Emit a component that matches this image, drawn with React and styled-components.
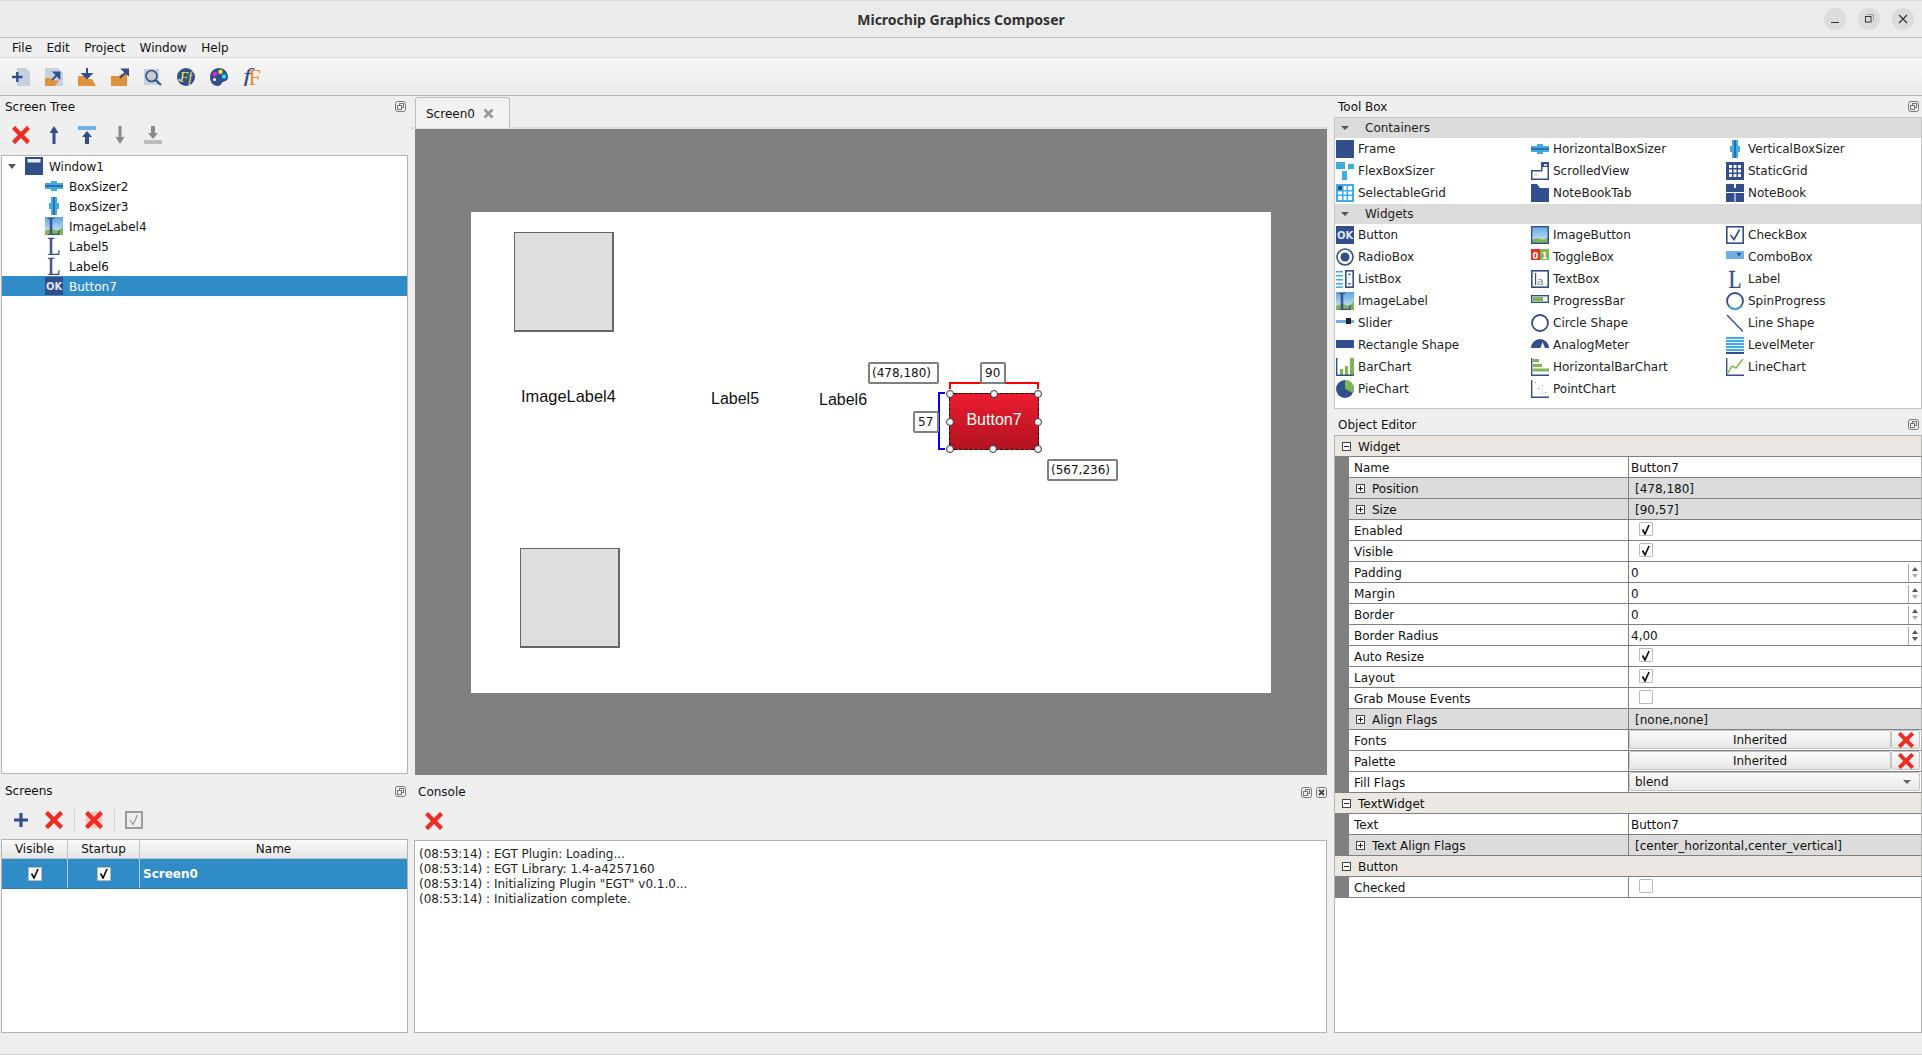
import React from "react";
import styled, { createGlobalStyle } from "styled-components";

const N = "#324f8c";
const B = "#3dade3";
const G = "#7fb654";
const R = "#f02b22";
const O = "#e0913c";
const P = "#c6d1df";

const Global = createGlobalStyle`
  html, body { margin: 0; padding: 0; height: 100%; overflow: hidden; background: #efefef; }
  body { font: 12px "DejaVu Sans", sans-serif; color: #111; }
  #root { height: 100%; }
  * { box-sizing: border-box; }
`;

const Svg = ({ size = 18, children }) => (
  <svg width={size} height={size} viewBox="0 0 18 18" style={{ display: "block", flex: "none" }}>{children}</svg>
);

const serif = '"Liberation Serif", serif';
const sans = '"DejaVu Sans", sans-serif';
const LGlyph = ({ fill = N }) => (
  <text x="2.5" y="17.5" fontFamily={serif} fontSize="26" fill={fill} stroke={fill} strokeWidth=".35" textLength="13" lengthAdjust="spacingAndGlyphs">L</text>
);
const Sky = () => (
  <>
    <defs>
      <linearGradient id="sky" x1="0" y1="0" x2="0" y2="1">
        <stop offset="0" stopColor="#5da7de" />
        <stop offset="1" stopColor="#dcecf6" />
      </linearGradient>
    </defs>
    <rect width="18" height="18" fill="url(#sky)" />
    <path d="M0 14 Q6 11 10 13 T18 9 V18 H0Z" fill={G} />
  </>
);
const Axes = () => <path d="M.7 0V17.3H18" fill="none" stroke={N} strokeWidth="1.4" />;
const XMark = ({ c = R }) => (
  <path d="M3 3L15 15M15 3L3 15" stroke={c} strokeWidth="4.4" strokeLinecap="square" fill="none" />
);

const icons = {
  frame: <rect width="18" height="18" fill={N} />,
  hbox: (<><path d="M0 6H6V4H12V6H18V12H12V14H6V12H0Z" fill={B} /><rect y="8.3" width="18" height="1.4" fill={N} /></>),
  vbox: (<><path d="M6 0V6H4V12H6V18H12V12H14V6H12V0Z" fill={B} /><rect x="8.3" width="1.4" height="18" fill={N} /></>),
  flex: (<><rect width="9" height="7" fill={B} /><rect x="12" y="2" width="6" height="5" fill={B} /><rect x="6" y="9" width="5" height="9" fill={B} /></>),
  scrolled: (<><path d="M10 0H18V18H0V8H10ZM11.500 5V9.500H1.500V16.500H16.500V5Z" fill={N} fillRule="evenodd" /><path d="M13 2h3v2h-3zM3 12h3v2H3z" fill="#cfe0f2" /></>),
  staticgrid: (<><rect width="18" height="18" fill={N} /><path d="M3 3h3v3H3zM7.500 3h3v3h-3zM12 3h3v3h-3zM3 7.500h3v3H3zM7.500 7.500h3v3h-3zM12 7.500h3v3h-3zM3 12h3v3H3zM7.500 12h3v3h-3zM12 12h3v3h-3z" fill="#fff" /></>),
  selgrid: (<><rect width="18" height="18" fill={B} /><path d="M2 2h4v4H2z" fill={N} /><path d="M7.500 2h3v4h-3zM12 2h4v4h-4zM2 7.500h4v3H2zM7.500 7.500h3v3h-3zM12 7.500h4v3h-4zM2 12h4v4H2zM7.500 12h3v4h-3zM12 12h4v4h-4z" fill="#fff" /></>),
  tab: <path d="M0 0H6L9 4H18V18H0Z" fill={N} />,
  notebook: (<><path d="M0 0H8V4H10V0H18V18H0Z" fill={N} /><rect y="8" width="18" height="1" fill="#fff" /><rect x="8.500" y="9" width="1" height="9" fill="#fff" /></>),
  ok: (<><rect width="18" height="18" fill={N} /><text x="9" y="13" textAnchor="middle" fontFamily={sans} fontWeight="700" fontSize="10" fill="#dce6f2">OK</text></>),
  imgbtn: (<><Sky /><rect x=".7" y=".7" width="16.600" height="16.600" fill="none" stroke={N} strokeWidth="1.4" /></>),
  check: (<><rect x=".8" y=".8" width="16.400" height="16.400" fill="#fff" stroke={N} strokeWidth="1.6" /><path d="M4.500 9L8 13.500L13.500 3.500" fill="none" stroke={N} strokeWidth="1.6" /></>),
  radio: (<><circle cx="9" cy="9" r="8" fill="#fff" stroke={N} strokeWidth="1.6" /><circle cx="9" cy="9" r="4.500" fill={N} /></>),
  toggle: (<><rect y="1" width="9" height="11" fill={R} /><rect x="9" y="1" width="9" height="11" fill={G} /><text x="4.500" y="10.500" textAnchor="middle" fontFamily={sans} fontWeight="700" fontSize="8.500" fill="#fff">0</text><text x="13.500" y="10.500" textAnchor="middle" fontFamily={sans} fontWeight="700" fontSize="8.500" fill="#fff">1</text></>),
  combo: (<><rect y="3" width="18" height="8" fill="#6fb0e4" /><path d="M10.500 5H15.500L13 8.500Z" fill={N} /></>),
  listbox: (<><path d="M0 1h7v1.500H0zM0 5h7v1.500H0zM0 9h7v1.500H0zM0 13h7v1.500H0zM0 16.500h7V18H0z" fill={B} /><rect x="9.800" y=".8" width="7.400" height="16.400" fill="#fff" stroke={N} strokeWidth="1.6" /><path d="M13.500 3l1.500 2h-3zM13.500 15l1.500-2h-3z" fill={N} /></>),
  textbox: (<><rect x=".8" y=".8" width="16.400" height="16.400" fill="#fff" stroke={N} strokeWidth="1.6" /><rect x="4" y="3" width="1.200" height="12" fill={N} /><text x="6" y="15" fontFamily={sans} fontSize="11" fill="#8a8a8a">a</text></>),
  label: <LGlyph />,
  imglabel: (<><Sky /><LGlyph /></>),
  progress: (<><rect x=".7" y="3.700" width="16.600" height="6.600" fill="#fff" stroke={N} strokeWidth="1.4" /><rect x="2" y="5" width="10" height="4" fill={G} /></>),
  spin: (<><circle cx="9" cy="9" r="8" fill="none" stroke={N} strokeWidth="1.800" /><path d="M15 14.500A8 8 0 0 1 3 14.500" fill="none" stroke={B} strokeWidth="1.800" /></>),
  slider: (<><rect y="6" width="18" height="3" fill="#6fb0e4" /><rect x="10" y="4" width="5" height="6" fill="#1d2433" /></>),
  circle: <circle cx="9" cy="9" r="8" fill="none" stroke={N} strokeWidth="1.800" />,
  line: <path d="M1 1L17 17.500" stroke={N} strokeWidth="1.400" fill="none" />,
  rect: <rect y="4" width="18" height="8" fill={N} />,
  meter: (<path d="M0 12A9 9 0 0 1 18 12H14L11.500 6L9.500 12Z" fill={N} />),
  level: (<><path d="M0 1h18v2H0zM0 4h18v2H0zM0 7h18v2H0zM0 10h18v2H0zM0 13h18v2H0z" fill={B} /><rect y="16" width="18" height="2" fill={N} /></>),
  bar: (<><path d="M4 11h3v6H4zM9 8h3v9H9zM14 0h4v17h-4z" fill={G} /><Axes /></>),
  hbar: (<><path d="M2 1h6v3H2zM2 6h9v3H2zM2 10.500h16v3H2z" fill={G} /><Axes /></>),
  linechart: (<><path d="M2 15L6 8L10 10L17 1" fill="none" stroke={G} strokeWidth="1.500" /><Axes /></>),
  pie: (<><circle cx="9" cy="9" r="9" fill={N} /><path d="M9 9V0A9 9 0 0 1 17 13Z" fill={G} /></>),
  point: (<><path d="M4 2h1v1H4zM7 8h1v1H7zM11 5h1v1h-1zM14 12h1v1h-1zM11 13h1v1h-1z" fill={G} /><Axes /></>),
  newfile: (<><path d="M5 0H14L18 4V18H5Z" fill={P} /><path d="M0 9H10.500M5.300 4V14" stroke={N} strokeWidth="2.400" fill="none" /></>),
  openfile: (<><path d="M0 0H13L18 5V18H0Z" fill={P} /><path d="M0 18V10H5L8 12.500H14L10 18Z" fill={O} /><path d="M7 12L13 6M9 4.500H14.500V10Z" stroke={N} strokeWidth="1.800" fill={N} /></>),
  savefile: (<><path d="M0 8H6L8 11H14L18 18H0Z" fill={O} /><path d="M9 0V9M5 6L9 10L13 6Z" stroke={N} strokeWidth="2" fill={N} /></>),
  export: (<><path d="M0 8H8L10 6H16V18H0Z" fill={O} /><path d="M9 10L16 3M11.500 1.500H17.500V7Z" stroke={N} strokeWidth="1.800" fill={N} /></>),
  search: (<><rect y="1" width="15" height="16" fill={P} /><circle cx="7.500" cy="8" r="5.500" fill="#c8cbd0" stroke={N} strokeWidth="1.600" /><path d="M11.500 12L17 17" stroke={N} strokeWidth="2.200" /></>),
  fontball: (<><circle cx="9" cy="9" r="9" fill={N} /><text x="9" y="14" textAnchor="middle" fontFamily={serif} fontStyle="italic" fontSize="14" fill="#ecec30">Ff</text><circle cx="2.500" cy="12" r="1" fill="#fff" /></>),
  palette: (<><path d="M9 0C14 0 18 4 18 9C18 13 15 13 13 14C11 15 11 18 8 18C3 18 0 14 0 9C0 4 4 0 9 0Z" fill={N} /><circle cx="5" cy="6" r="2.200" fill="#f020d0" /><circle cx="10.500" cy="3.800" r="2.200" fill="#f4ee20" /><circle cx="14" cy="8.500" r="2.200" fill="#20e0ee" /><circle cx="4.500" cy="11.500" r="1.500" fill="#fff" /></>),
  fF: (<><text x="0" y="16" fontFamily={serif} fontStyle="italic" fontSize="23" fill={N} textLength="8" lengthAdjust="spacingAndGlyphs">f</text><text x="5.500" y="16.500" fontFamily={serif} fontSize="24" fill={O} textLength="12.500" lengthAdjust="spacingAndGlyphs">F</text></>),
  x: <XMark />,
  xRing: (<><circle cx="9" cy="9" r="8.500" fill="#f6c9c9" /><XMark /></>),
  up: <path d="M9 0L13.500 7H10.500V18H7.500V7H4.500Z" fill={N} />,
  top: (<><rect width="18" height="4" fill="#6fb0e4" /><path d="M9 5L14 11H11V18H7V11H4Z" fill={N} /></>),
  down: <path d="M9 18L13.500 11H10.500V0H7.500V11H4.500Z" fill="#8a8a8a" />,
  bottom: (<><rect y="14" width="18" height="4" fill="#bdbdbd" /><path d="M9 13L14 7H11V0H7V7H4Z" fill="#8a8a8a" /></>),
  plus: <path d="M2 9H16M9 2V16" stroke={N} strokeWidth="3.200" fill="none" />,
  checkGray: (<><rect x="1" y="1" width="16" height="16" fill="#eee" stroke="#9a9a9a" strokeWidth="2" /><path d="M5 9L8 13.500L12.500 4" fill="none" stroke="#9a9a9a" strokeWidth="1.200" /></>),
  window: (<><rect width="18" height="18" fill={N} /><rect x="2.500" y="2" width="13" height="3.500" fill="#e8ecf2" /></>),
};

const Icon = ({ name, size }) => <Svg size={size}>{icons[name]}</Svg>;

/* window chrome */
const Root = styled.div`
  height: 100%;
  display: flex;
  flex-direction: column;
  background: #efefef;
  border-top: 1px solid #d8d8d8;
`;
const TitleBar = styled.header`
  height: 37px;
  flex: none;
  background: #ebebeb;
  border-bottom: 1px solid #bdbdbd;
  display: flex;
  align-items: center;
  justify-content: flex-end;
  padding-right: 8px;
  gap: 12px;
  position: relative;
`;
const Title = styled.h1`
  position: absolute;
  left: 0;
  right: 0;
  top: 0;
  margin: 0;
  text-align: center;
  font: 700 14px/38px "Noto Sans", sans-serif;
  color: #333;
`;
const WinButton = styled.span`
  width: 22px;
  height: 22px;
  border-radius: 50%;
  background: #dcdcdc;
  display: flex;
  align-items: center;
  justify-content: center;
  position: relative;
`;
const MenuBar = styled.nav`
  height: 20px;
  flex: none;
  display: flex;
  align-items: center;
  padding: 1px 0 0 12px;
  gap: 14.4px;
  background: #efefef;
  border-bottom: 1px solid #dcdcdc;
`;
const MenuItem = styled.span`
  line-height: 18px;
`;
const ToolBar = styled.div`
  height: 38px;
  flex: none;
  display: flex;
  align-items: center;
  padding: 1px 0 0 12px;
  gap: 15px;
  background: linear-gradient(#f6f6f6, #ececec);
  border-bottom: 1px solid #b8b8b8;
`;
const Main = styled.main`
  flex: 1;
  min-height: 0;
  display: grid;
  grid-template-columns: 411px 919px 592px;
`;
const StatusBar = styled.footer`
  height: 22px;
  flex: none;
  background: #efefef;
  border-bottom: 1px solid #d0d0d0;
`;

/* docks */
const Column = styled.section`
  display: flex;
  flex-direction: column;
  min-height: 0;
`;
const Dock = styled.div`
  display: flex;
  flex-direction: column;
  height: ${(p) => p.$h}px;
  flex: ${(p) => (p.$h ? "none" : "1")};
  padding: 0 ${(p) => p.$pr ?? 3}px ${(p) => p.$pb ?? 0}px ${(p) => p.$pl ?? 1}px;
  min-height: 0;
`;
const DockHead = styled.div`
  height: ${(p) => p.$h ?? 21}px;
  flex: none;
  display: flex;
  align-items: center;
  justify-content: space-between;
  padding: ${(p) => p.$pt ?? 0}px ${(p) => p.$pr ?? 2}px 0 ${(p) => p.$pl ?? 4}px;
`;
const DockTitle = styled.span`
  line-height: 16px;
`;
const DockBtns = styled.span`
  display: flex;
  gap: 4px;
`;
const DockBar = styled.div`
  height: ${(p) => p.$h ?? 38}px;
  flex: none;
  display: flex;
  align-items: center;
  padding: 0 0 ${(p) => p.$pb ?? 2}px ${(p) => p.$pl ?? 11}px;
  gap: 15px;
`;
const Divider = styled.i`
  width: 1px;
  height: 22px;
  background: #d4d4d4;
  margin: 0 -4.5px;
`;
const WhiteBox = styled.div`
  flex: 1;
  min-height: 0;
  background: #fff;
  border: 1px solid #b4b4b4;
  overflow: hidden;
  position: relative;
`;

const FloatIcon = () => (
  <svg width="11" height="11" viewBox="0 0 11 11" style={{ display: "block" }}>
    <rect x=".5" y=".5" width="10" height="10" rx="2" fill="#efefef" stroke="#777" />
    <rect x="4.500" y="2.500" width="4" height="4" fill="none" stroke="#777" />
    <rect x="2.500" y="4.500" width="4" height="4" fill="#efefef" stroke="#777" />
  </svg>
);
const CloseIcon = () => (
  <svg width="11" height="11" viewBox="0 0 11 11" style={{ display: "block" }}>
    <rect x=".5" y=".5" width="10" height="10" rx="2" fill="#efefef" stroke="#777" />
    <path d="M3 3L8 8M8 3L3 8" stroke="#444" strokeWidth="1.800" />
  </svg>
);

/* tree */
const TreeRow = styled.div`
  height: 20px;
  display: flex;
  align-items: center;
  gap: 6px;
  padding-left: ${(p) => (p.$root ? 6 : 43)}px;
  background: ${(p) => (p.$sel ? "#308cc6" : "transparent")};
  color: ${(p) => (p.$sel ? "#fff" : "#111")};
`;
const TreeText = styled.span`
  padding-top: 2px;
`;
const TreeCaret = styled.span`
  width: 0;
  height: 0;
  border: 4px solid transparent;
  border-top: 5px solid #555;
  border-bottom: 0;
  margin-right: 3px;
`;

/* screens table */
const GridHead = styled.div`
  height: 19px;
  display: grid;
  grid-template-columns: 66px 72px 1fr;
  background: linear-gradient(#fafafa, #e6e6e6);
  border-bottom: 1px solid #c4c4c4;
`;
const GridHeadCell = styled.span`
  text-align: center;
  line-height: 19px;
  border-right: 1px solid #c4c4c4;
  &:last-child { border-right: 0; }
`;
const GridRow = styled.div`
  height: 30px;
  display: grid;
  grid-template-columns: 66px 72px 1fr;
  background: #308cc6;
  color: #fff;
  font-weight: 700;
  border-bottom: 1px solid #2a7bb0;
`;
const GridCell = styled.span`
  display: flex;
  align-items: center;
  justify-content: ${(p) => (p.$text ? "flex-start" : "center")};
  padding-left: ${(p) => (p.$text ? 3 : 0)}px;
  border-right: 1px solid #a8d0e8;
  &:last-child { border-right: 0; }
`;
const CheckBox = styled.span`
  width: 14px;
  height: 14px;
  flex: none;
  background: #fff;
  border: 1px solid #bbb;
  border-radius: 1px;
  display: flex;
  align-items: center;
  justify-content: center;
`;
const Tick = () => (
  <svg width="10" height="11" viewBox="0 0 10 11"><path d="M1.500 5.500L4 10L8 1" fill="none" stroke="#111" strokeWidth="1.700" /></svg>
);

/* centre */
const TabBar = styled.div`
  height: 33px;
  flex: none;
  padding: 1px 0 0 4px;
  display: flex;
  align-items: flex-start;
  border-bottom: 2px solid #dcdcdc;
`;
const Tab = styled.div`
  width: 95px;
  height: 31px;
  background: #f2f2f2;
  border: 1px solid #bdbdbd;
  border-bottom: 0;
  border-radius: 3px 3px 0 0;
  display: flex;
  align-items: center;
  gap: 8px;
  padding: 1px 0 0 10px;
`;
const Canvas = styled.div`
  flex: 1;
  min-height: 0;
  margin-left: 4px;
  margin-right: 3px;
  background: #808080;
  position: relative;
  overflow: hidden;
`;
const Screen = styled.div`
  position: absolute;
  left: 56px;
  top: 83px;
  width: 800px;
  height: 481px;
  background: #fff;
  font-family: "Liberation Sans", Arial, sans-serif;
`;
const ImageWidget = styled.div`
  position: absolute;
  left: ${(p) => p.$x}px;
  top: ${(p) => p.$y}px;
  width: 100px;
  height: 100px;
  background: #dedede;
  border: 1px solid #666;
  border-right-width: 2px;
  border-bottom-width: 2px;
`;
const LabelWidget = styled.span`
  position: absolute;
  left: ${(p) => p.$x}px;
  top: ${(p) => p.$y}px;
  font-size: ${(p) => p.$s ?? 16}px;
  line-height: 20px;
  color: #111;
  white-space: nowrap;
`;
const ButtonWidget = styled.div`
  position: absolute;
  left: 478px;
  top: 181px;
  width: 90px;
  height: 57px;
  background: linear-gradient(#ec1c30, #b21220);
  color: #fff;
  font-size: 16px;
  display: flex;
  align-items: center;
  justify-content: center;
  padding-bottom: 3px;
  border: 1px dashed #000;
`;
const Handle = styled.i`
  position: absolute;
  left: ${(p) => p.$x}px;
  top: ${(p) => p.$y}px;
  width: 8px;
  height: 8px;
  border-radius: 50%;
  background: #f4f4f4;
  border: 1.5px solid #333;
`;
const Tip = styled.div`
  position: absolute;
  left: ${(p) => p.$x}px;
  top: ${(p) => p.$y}px;
  width: ${(p) => p.$w}px;
  height: 22px;
  background: #fff;
  border: 2px solid #7f7f7f;
  border-radius: 2px;
  font: 12px/18px "DejaVu Sans", sans-serif;
  color: #111;
  padding-left: ${(p) => p.$pl ?? 2}px;
  white-space: nowrap;
`;
const Bracket = styled.div`
  position: absolute;
  left: ${(p) => p.$x}px;
  top: ${(p) => p.$y}px;
  width: ${(p) => p.$w}px;
  height: ${(p) => p.$h}px;
  border: 2px solid ${(p) => p.$c};
  ${(p) => (p.$side === "top" ? "border-bottom: 0;" : "border-right: 0;")}
`;

const ConsoleText = styled.pre`
  margin: 0;
  padding: 6px 0 0 4px;
  font: 12px/15px "DejaVu Sans", sans-serif;
  color: #222;
`;

/* tool box */
const ToolBoxFrame = styled.div`
  height: 292px;
  flex: none;
  background: #fff;
  border: 1px solid #c4c4c4;
`;
const ToolGroupHead = styled.div`
  height: 20px;
  background: #dcdcdc;
  display: flex;
  align-items: center;
  padding-left: 6px;
  color: #222;
`;
const GroupCaret = styled.span`
  width: 0;
  height: 0;
  border: 4px solid transparent;
  border-top: 4px solid #555;
  border-bottom: 0;
  margin-right: 16px;
`;
const ToolGrid = styled.div`
  display: grid;
  grid-template-columns: repeat(3, 195px);
  grid-auto-rows: 22px;
  padding-left: 1px;
`;
const ToolItem = styled.div`
  display: flex;
  align-items: center;
  gap: 4px;
  color: #222;
`;

/* property grid */
const PropFrame = styled.div`
  flex: 1;
  min-height: 0;
  background: #fff;
  border: 1px solid #b4b4b4;
`;
const SectionRow = styled.div`
  height: 21px;
  background: #ece8e1;
  border-bottom: 1px solid #808080;
  display: flex;
  align-items: center;
  gap: 7px;
  padding: 1px 0 0 7px;
`;
const PropRow = styled.div`
  height: 21px;
  display: grid;
  grid-template-columns: 14px 280px 1fr;
  background: ${(p) => (p.$group ? "#dcdcdc" : "#fff")};
`;
const Gutter = styled.span`
  background: #7f7f7f;
`;
const PropLabel = styled.span`
  display: flex;
  align-items: center;
  gap: 7px;
  padding: 1px 0 0 ${(p) => (p.$group ? 7 : 5)}px;
  border-right: 1px solid #808080;
  border-bottom: 1px solid #808080;
`;
const PropValue = styled.span`
  display: flex;
  align-items: center;
  justify-content: space-between;
  padding: 1px 0 0 ${(p) => (p.$group ? 6 : 2)}px;
  border-bottom: 1px solid #808080;
  min-width: 0;
`;
const CheckCell = styled.span`
  padding: 0 0 2px 10px;
  display: flex;
  align-items: center;
  border-bottom: 1px solid #808080;
`;
const Expander = styled.span`
  width: 9px;
  height: 9px;
  flex: none;
  border: 1px solid #444;
  background: #fff;
  position: relative;
  &::before {
    content: "";
    position: absolute;
    left: 1px;
    right: 1px;
    top: 3px;
    height: 1px;
    background: #222;
  }
  ${(p) => p.$plus && `&::after {
    content: "";
    position: absolute;
    top: 1px;
    bottom: 1px;
    left: 3px;
    width: 1px;
    background: #222;
  }`}
`;
const Spin = styled.span`
  width: 13px;
  height: 18px;
  border-left: 1px solid #aaa;
  display: flex;
  flex-direction: column;
  align-items: center;
  justify-content: center;
  gap: 3px;
`;
const SpinUp = styled.i`
  border: 3.5px solid transparent;
  border-top: 0;
  border-bottom: 4px solid #555;
`;
const SpinDown = styled.i`
  border: 3.5px solid transparent;
  border-bottom: 0;
  border-top: 4px solid ${(p) => (p.$dim ? "#aaa" : "#555")};
`;
const FlatButtonCell = styled.span`
  display: grid;
  grid-template-columns: 1fr 29px;
  padding: 0 1px 1px 0;
  border-bottom: 1px solid #808080;
`;
const FlatButton = styled.span`
  display: flex;
  align-items: center;
  justify-content: center;
  background: linear-gradient(#fbfbfb, #e6e6e6);
  border: 1px solid #c4c4c4;
  border-radius: 2px;
`;
const ComboCell = styled.span`
  padding: 0 1px 1px 0;
  border-bottom: 1px solid #808080;
  display: flex;
`;
const Combo = styled.span`
  flex: 1;
  display: flex;
  align-items: center;
  justify-content: space-between;
  padding: 0 8px 0 5px;
  background: linear-gradient(#fbfbfb, #e8e8e8);
  border: 1px solid #c4c4c4;
  border-radius: 2px;
`;
const ComboArrow = styled.i`
  border: 4px solid transparent;
  border-bottom: 0;
  border-top: 4px solid #666;
`;

const treeItems = [
  ["hbox", "BoxSizer2"], ["vbox", "BoxSizer3"], ["imglabel", "ImageLabel4"], ["label", "Label5"], ["label", "Label6"],
];
const containers = [
  ["frame", "Frame"], ["hbox", "HorizontalBoxSizer"], ["vbox", "VerticalBoxSizer"],
  ["flex", "FlexBoxSizer"], ["scrolled", "ScrolledView"], ["staticgrid", "StaticGrid"],
  ["selgrid", "SelectableGrid"], ["tab", "NoteBookTab"], ["notebook", "NoteBook"],
];
const widgets = [
  ["ok", "Button"], ["imgbtn", "ImageButton"], ["check", "CheckBox"],
  ["radio", "RadioBox"], ["toggle", "ToggleBox"], ["combo", "ComboBox"],
  ["listbox", "ListBox"], ["textbox", "TextBox"], ["label", "Label"],
  ["imglabel", "ImageLabel"], ["progress", "ProgressBar"], ["spin", "SpinProgress"],
  ["slider", "Slider"], ["circle", "Circle Shape"], ["line", "Line Shape"],
  ["rect", "Rectangle Shape"], ["meter", "AnalogMeter"], ["level", "LevelMeter"],
  ["bar", "BarChart"], ["hbar", "HorizontalBarChart"], ["linechart", "LineChart"],
  ["pie", "PieChart"], ["point", "PointChart"],
];
const handles = [
  [-4, -4], [40, -4], [84, -4], [-4, 24], [84, 24], [-4, 51], [39, 51], [84, 51],
];

const Row = ({ label, value }) => (
  <PropRow>
    <Gutter />
    <PropLabel>{label}</PropLabel>
    <PropValue>{value}</PropValue>
  </PropRow>
);
const GroupRow = ({ label, value }) => (
  <PropRow $group>
    <Gutter />
    <PropLabel $group><Expander $plus />{label}</PropLabel>
    <PropValue $group>{value}</PropValue>
  </PropRow>
);
const CheckRow = ({ label, on }) => (
  <PropRow>
    <Gutter />
    <PropLabel>{label}</PropLabel>
    <CheckCell><CheckBox>{on && <Tick />}</CheckBox></CheckCell>
  </PropRow>
);
const SpinRow = ({ label, value, dim = true }) => (
  <PropRow>
    <Gutter />
    <PropLabel>{label}</PropLabel>
    <PropValue>{value}<Spin><SpinUp /><SpinDown $dim={dim} /></Spin></PropValue>
  </PropRow>
);
const ButtonRow = ({ label }) => (
  <PropRow>
    <Gutter />
    <PropLabel>{label}</PropLabel>
    <FlatButtonCell>
      <FlatButton>Inherited</FlatButton>
      <FlatButton><Icon name="x" size={16} /></FlatButton>
    </FlatButtonCell>
  </PropRow>
);
const Section = ({ children }) => (
  <SectionRow><Expander />{children}</SectionRow>
);

export default function App() {
  return (
    <Root>
      <Global />
      <TitleBar>
        <Title>Microchip Graphics Composer</Title>
        <WinButton><svg width="10" height="10" viewBox="0 0 10 10"><path d="M1 8.500H9" stroke="#333" strokeWidth="1" /></svg></WinButton>
        <WinButton><svg width="10" height="10" viewBox="0 0 10 10"><rect x="1.500" y="2.500" width="5.500" height="5.500" fill="none" stroke="#333" /><path d="M3.500 .5H9.500V6.500" fill="none" stroke="#999" /></svg></WinButton>
        <WinButton><svg width="10" height="10" viewBox="0 0 10 10"><path d="M1 1L9 9M9 1L1 9" stroke="#333" strokeWidth="1.200" /></svg></WinButton>
      </TitleBar>
      <MenuBar>
        {["File", "Edit", "Project", "Window", "Help"].map((m) => <MenuItem key={m}>{m}</MenuItem>)}
      </MenuBar>
      <ToolBar>
        {["newfile", "openfile", "savefile", "export", "search", "fontball", "palette", "fF"].map((n) => <Icon key={n} name={n} />)}
      </ToolBar>
      <Main>
        <Column>
          <Dock $h={683} $pb={5}>
            <DockHead $pl={4} $pr={2}><DockTitle>Screen Tree</DockTitle><DockBtns><FloatIcon /></DockBtns></DockHead>
            <DockBar>
              {["x", "up", "top", "down", "bottom"].map((n) => <Icon key={n} name={n} />)}
            </DockBar>
            <WhiteBox>
              <TreeRow $root><TreeCaret /><Icon name="window" /><TreeText>Window1</TreeText></TreeRow>
              {treeItems.map(([i, t]) => <TreeRow key={t}><Icon name={i} /><TreeText>{t}</TreeText></TreeRow>)}
              <TreeRow $sel><Icon name="ok" /><TreeText>Button7</TreeText></TreeRow>
            </WhiteBox>
          </Dock>
          <Dock>
            <DockHead $h={24} $pl={4} $pr={2}><DockTitle>Screens</DockTitle><DockBtns><FloatIcon /></DockBtns></DockHead>
            <DockBar $h={36} $pl={11} $pb={2}>
              <Icon name="plus" />
              <Icon name="x" />
              <Divider />
              <Icon name="xRing" />
              <Divider />
              <Icon name="checkGray" />
            </DockBar>
            <WhiteBox>
              <GridHead><GridHeadCell>Visible</GridHeadCell><GridHeadCell>Startup</GridHeadCell><GridHeadCell>Name</GridHeadCell></GridHead>
              <GridRow>
                <GridCell><CheckBox><Tick /></CheckBox></GridCell>
                <GridCell><CheckBox><Tick /></CheckBox></GridCell>
                <GridCell $text>Screen0</GridCell>
              </GridRow>
            </WhiteBox>
          </Dock>
        </Column>
        <Column>
          <Dock $h={683} $pl={0} $pr={0} $pb={4}>
            <TabBar>
              <Tab>Screen0 <svg width="11" height="11" viewBox="0 0 11 11"><path d="M1.500 1.500L9.500 9.500M9.500 1.500L1.500 9.500" stroke="#999" strokeWidth="2.600" /></svg></Tab>
            </TabBar>
            <Canvas>
              <Screen>
                <ImageWidget $x={43} $y={20} />
                <ImageWidget $x={49} $y={336} />
                <LabelWidget $x={50} $y={174} $s={16.4}>ImageLabel4</LabelWidget>
                <LabelWidget $x={240} $y={177}>Label5</LabelWidget>
                <LabelWidget $x={348} $y={178}>Label6</LabelWidget>
                <ButtonWidget>
                  Button7
                  {handles.map(([x, y]) => <Handle key={`${x}-${y}`} $x={x} $y={y} />)}
                </ButtonWidget>
                <Bracket $side="top" $c="#f00" $x={478} $y={170} $w={90} $h={7} />
                <Bracket $side="left" $c="#00f" $x={467} $y={180} $w={7} $h={58} />
                <Tip $x={397} $y={150} $w={71}>(478,180)</Tip>
                <Tip $x={509} $y={150} $w={26} $pl={3}>90</Tip>
                <Tip $x={442} $y={199} $w={26} $pl={3}>57</Tip>
                <Tip $x={576} $y={247} $w={71}>(567,236)</Tip>
              </Screen>
            </Canvas>
          </Dock>
          <Dock $pl={3} $pr={3}>
            <DockHead $h={26} $pl={4} $pr={0}>
              <DockTitle>Console</DockTitle>
              <DockBtns><FloatIcon /><CloseIcon /></DockBtns>
            </DockHead>
            <DockBar $h={35} $pl={11} $pb={3}><Icon name="x" /></DockBar>
            <WhiteBox>
              <ConsoleText>{`(08:53:14) : EGT Plugin: Loading...
(08:53:14) : EGT Library: 1.4-a4257160
(08:53:14) : Initializing Plugin "EGT" v0.1.0...
(08:53:14) : Initialization complete.`}</ConsoleText>
            </WhiteBox>
          </Dock>
        </Column>
        <Column>
          <Dock $pl={4} $pr={0}>
            <DockHead $pl={4} $pr={3}><DockTitle>Tool Box</DockTitle><DockBtns><FloatIcon /></DockBtns></DockHead>
            <ToolBoxFrame>
              <ToolGroupHead><GroupCaret />Containers</ToolGroupHead>
              <ToolGrid>{containers.map(([i, t]) => <ToolItem key={t}><Icon name={i} /><span>{t}</span></ToolItem>)}</ToolGrid>
              <ToolGroupHead><GroupCaret />Widgets</ToolGroupHead>
              <ToolGrid>{widgets.map(([i, t]) => <ToolItem key={t}><Icon name={i} /><span>{t}</span></ToolItem>)}</ToolGrid>
            </ToolBoxFrame>
            <DockHead $h={26} $pl={4} $pr={3} $pt={5}><DockTitle>Object Editor</DockTitle><DockBtns><FloatIcon /></DockBtns></DockHead>
            <PropFrame>
              <Section>Widget</Section>
              <Row label="Name" value="Button7" />
              <GroupRow label="Position" value="[478,180]" />
              <GroupRow label="Size" value="[90,57]" />
              <CheckRow label="Enabled" on />
              <CheckRow label="Visible" on />
              <SpinRow label="Padding" value="0" />
              <SpinRow label="Margin" value="0" />
              <SpinRow label="Border" value="0" />
              <SpinRow label="Border Radius" value="4,00" dim={false} />
              <CheckRow label="Auto Resize" on />
              <CheckRow label="Layout" on />
              <CheckRow label="Grab Mouse Events" />
              <GroupRow label="Align Flags" value="[none,none]" />
              <ButtonRow label="Fonts" />
              <ButtonRow label="Palette" />
              <PropRow>
                <Gutter />
                <PropLabel>Fill Flags</PropLabel>
                <ComboCell><Combo>blend<ComboArrow /></Combo></ComboCell>
              </PropRow>
              <Section>TextWidget</Section>
              <Row label="Text" value="Button7" />
              <GroupRow label="Text Align Flags" value="[center_horizontal,center_vertical]" />
              <Section>Button</Section>
              <CheckRow label="Checked" />
            </PropFrame>
          </Dock>
        </Column>
      </Main>
      <StatusBar />
    </Root>
  );
}
